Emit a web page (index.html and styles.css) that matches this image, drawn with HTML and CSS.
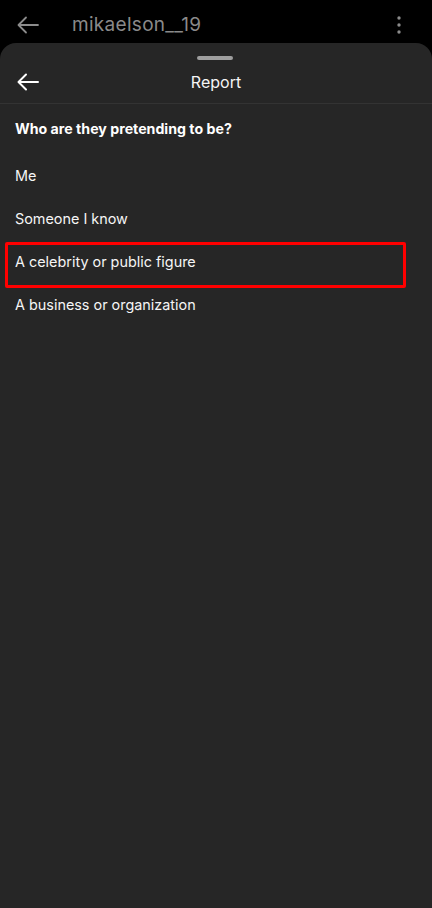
FILE: index.html
```html
<!DOCTYPE html>
<html lang="en">
<head>
    <meta charset="UTF-8">
    <meta name="viewport" content="width=device-width, initial-scale=1.0">
    <title>Report</title>
    <link rel="stylesheet" href="styles.css">
</head>
<body>
    <div class="topbar">
        <svg class="back-icon dim" viewBox="0 0 24 24" width="24" height="24">
            <path d="M22 12H3M10 4.5L2.5 12l7.5 7.5" fill="none" stroke="currentColor" stroke-width="1.8" stroke-linecap="round" stroke-linejoin="round"/>
        </svg>
        <div class="username">mikaelson__19</div>
        <svg class="more-icon" viewBox="0 0 6 20" width="6" height="20">
            <circle cx="3" cy="3" r="1.7" fill="currentColor"/>
            <circle cx="3" cy="10" r="1.7" fill="currentColor"/>
            <circle cx="3" cy="17" r="1.7" fill="currentColor"/>
        </svg>
    </div>

    <div class="sheet">
        <div class="handle"></div>
        <div class="sheet-header">
            <svg class="back-icon" viewBox="0 0 24 24" width="24" height="24">
                <path d="M22 12H3M10 4.5L2.5 12l7.5 7.5" fill="none" stroke="currentColor" stroke-width="2" stroke-linecap="round" stroke-linejoin="round"/>
            </svg>
            <div class="sheet-title">Report</div>
        </div>

        <div class="question">Who are they pretending to be?</div>

        <div class="options">
            <div class="option">Me</div>
            <div class="option">Someone I know</div>
            <div class="option highlighted">A celebrity or public figure</div>
            <div class="option">A business or organization</div>
        </div>
    </div>
</body>
</html>
```

FILE: styles.css
```css
body {
    margin: 0;
    background: #000;
    font-family: 'Inter', 'Roboto', sans-serif;
    color: #f5f5f5;
    height: 908px;
    display: flex;
    flex-direction: column;
    overflow: hidden;
}

.topbar {
    height: 43px;
    display: flex;
    align-items: center;
    padding: 5px 0 0 16px;
    box-sizing: border-box;
    flex-shrink: 0;
}

.back-icon {
    color: #fff;
    flex-shrink: 0;
}

.back-icon.dim {
    color: #8c8c8c;
    margin-top: 2px;
}

.username {
    margin-left: 32px;
    margin-top: 1px;
    font-size: 19px;
    color: #8a8a8a;
    letter-spacing: 0.3px;
    flex: 1;
}

.more-icon {
    color: #8c8c8c;
    margin-right: 30px;
    margin-top: 2px;
}

.sheet {
    flex: 1;
    background: #262626;
    border-radius: 16px 16px 0 0;
    display: flex;
    flex-direction: column;
    padding-top: 13px;
}

.handle {
    width: 36px;
    height: 4px;
    border-radius: 2px;
    background: #9e9e9e;
    align-self: center;
    margin-left: -2px;
}

.sheet-header {
    height: 42px;
    display: flex;
    align-items: center;
    padding-left: 16px;
    border-bottom: 1px solid #333;
    margin-top: 1px;
    position: relative;
}

.sheet-title {
    position: absolute;
    left: 0;
    right: 0;
    text-align: center;
    font-size: 16px;
    color: #f5f5f5;
}

.question {
    padding: 15px 15px 0;
    font-size: 14.2px;
    line-height: 20px;
    font-weight: 700;
    color: #fff;
}

.options {
    display: flex;
    flex-direction: column;
    margin-top: 15px;
}

.option {
    height: 43px;
    display: flex;
    align-items: center;
    padding-left: 15px;
    font-size: 14.4px;
    color: #f5f5f5;
    position: relative;
}

.option.highlighted::after {
    content: "";
    position: absolute;
    top: 2px;
    left: 5px;
    width: 401px;
    height: 46px;
    box-sizing: border-box;
    border: 3px solid #ff0000;
    border-radius: 2px;
}
```
